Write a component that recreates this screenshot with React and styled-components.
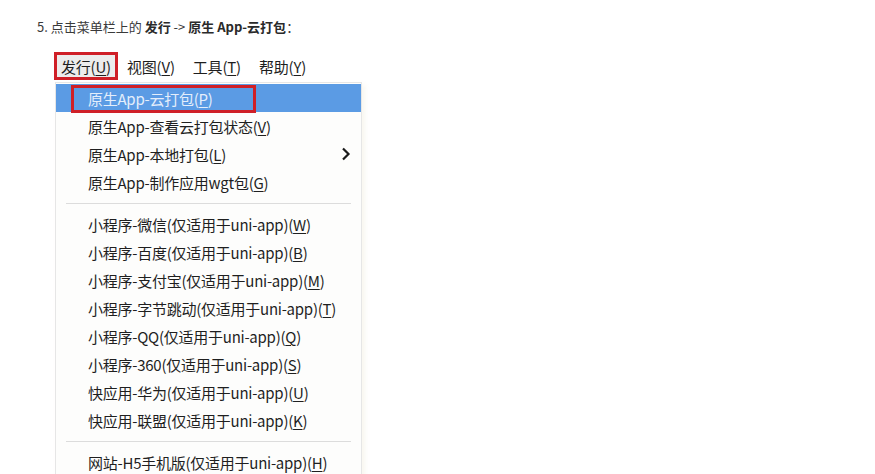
import React from "react";
import styled, { createGlobalStyle } from "styled-components";

const Global = createGlobalStyle`
  html, body { margin: 0; padding: 0; background: #ffffff; }
  body { font-family: "Noto Sans CJK SC", "Liberation Sans", sans-serif; color: #333; }
`;

const Page = styled.div`
  padding: 17px 0 0 37px;
  width: 875px;
  height: 474px;
  box-sizing: border-box;
  overflow: hidden;
`;

const Step = styled.p`
  margin: 0;
  font-size: 13px;
  line-height: 20px;
  color: #3a3a3a;
  b { font-weight: 700; color: #2a2a2a; }
`;

const MenuArea = styled.div`
  margin: 15px 0 0 17px;
  display: flex;
  flex-direction: column;
`;

const MenuBar = styled.div`
  display: flex;
  align-items: center;
  height: 28px;
`;

const BarItem = styled.div`
  box-sizing: border-box;
  height: 28px;
  display: flex;
  align-items: center;
  font-size: 15px;
  letter-spacing: -0.2px;
  color: #1e1e1e;
  padding: 0 ${(p) => (p.$active ? "4px" : "6px")};
  background: ${(p) => (p.$active ? "#ececec" : "transparent")};
  border: ${(p) => (p.$active ? "3px solid #cf1f27" : "3px solid transparent")};
  u { text-decoration-thickness: 1px; text-underline-offset: 2px; }
`;

const Dropdown = styled.div`
  margin: 2px 0 0 1px;
  width: 307px;
  background: #fdfdfc;
  border: 1px solid #e6e6e6;
  box-shadow: 3px 3px 5px rgba(200, 180, 120, 0.12);
  padding: 1px 0 0;
  box-sizing: border-box;
`;

const Row = styled.div`
  height: 28px;
  display: flex;
  align-items: center;
  justify-content: space-between;
  padding: 0 9px 0 ${(p) => (p.$boxed ? "15px" : "32px")};
  font-size: 15px;
  letter-spacing: -0.25px;
  color: ${(p) => (p.$hl ? "#e4eefb" : "#1f1f1f")};
  background: ${(p) => (p.$hl ? "#5b9be4" : "transparent")};
  white-space: nowrap;
  u { text-decoration-thickness: 1px; text-underline-offset: 2px; }
`;

const Boxed = styled.span`
  box-sizing: border-box;
  display: inline-flex;
  align-items: center;
  height: 28px;
  width: 185px;
  padding-left: 14px;
  border: 3px solid #cf1f27;
  margin-top: 1px;
`;

const Separator = styled.div`
  height: 14px;
  display: flex;
  align-items: center;
  padding: 0 10px;
  &::after {
    content: "";
    flex: 1;
    height: 1px;
    background: #dcdcdc;
  }
`;

const Chevron = () => (
  <svg width="12" height="16" viewBox="0 0 12 16">
    <path d="M3 2.5 L8.5 8 L3 13.5" fill="none" stroke="#1a1a1a" strokeWidth="2.2" />
  </svg>
);

const Label = ({ text, k }) => (
  <span>
    {text}(<u>{k}</u>)
  </span>
);

const group1 = [
  ["原生App-查看云打包状态", "V"],
  ["原生App-本地打包", "L", true],
  ["原生App-制作应用wgt包", "G"],
];

const group2 = [
  ["小程序-微信(仅适用于uni-app)", "W"],
  ["小程序-百度(仅适用于uni-app)", "B"],
  ["小程序-支付宝(仅适用于uni-app)", "M"],
  ["小程序-字节跳动(仅适用于uni-app)", "T"],
  ["小程序-QQ(仅适用于uni-app)", "Q"],
  ["小程序-360(仅适用于uni-app)", "S"],
  ["快应用-华为(仅适用于uni-app)", "U"],
  ["快应用-联盟(仅适用于uni-app)", "K"],
];

export default function App() {
  return (
    <>
      <Global />
      <Page>
        <Step>
          5. 点击菜单栏上的 <b>发行</b> -&gt; <b>原生 App-云打包</b>：
        </Step>
        <MenuArea>
          <MenuBar>
            <BarItem $active>
              <Label text="发行" k="U" />
            </BarItem>
            <BarItem>
              <Label text="视图" k="V" />
            </BarItem>
            <BarItem>
              <Label text="工具" k="T" />
            </BarItem>
            <BarItem>
              <Label text="帮助" k="Y" />
            </BarItem>
          </MenuBar>
          <Dropdown>
            <Row $hl $boxed>
              <Boxed>
                原生App-云打包(<u>P</u>)
              </Boxed>
            </Row>
            {group1.map(([t, k, sub]) => (
              <Row key={k}>
                <Label text={t} k={k} />
                {sub && <Chevron />}
              </Row>
            ))}
            <Separator />
            {group2.map(([t, k]) => (
              <Row key={k}>
                <Label text={t} k={k} />
              </Row>
            ))}
            <Separator />
            <Row>
              <Label text="网站-H5手机版(仅适用于uni-app)" k="H" />
            </Row>
          </Dropdown>
        </MenuArea>
      </Page>
    </>
  );
}
